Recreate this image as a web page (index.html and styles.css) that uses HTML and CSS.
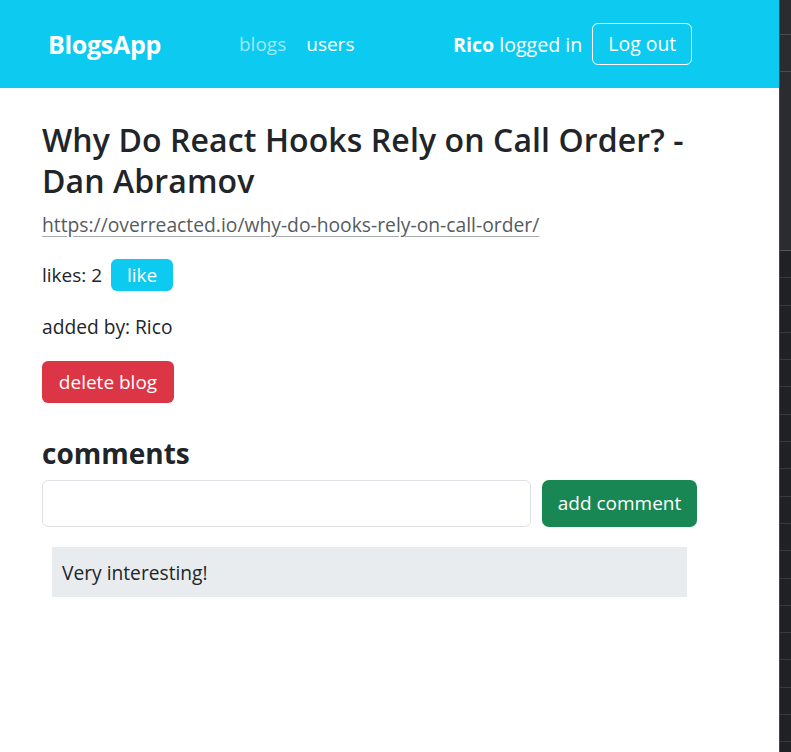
FILE: index.html
```html
<!DOCTYPE html>
<html lang="en">
<head>
<meta charset="utf-8">
<title>BlogsApp</title>
<link rel="stylesheet" href="styles.css">
</head>
<body>
<div class="page">
  <div class="app">
    <nav class="navbar">
      <a class="brand" href="#">BlogsApp</a>
      <div class="nav-links">
        <a class="nav-link dim" href="#">blogs</a>
        <a class="nav-link" href="#">users</a>
      </div>
      <div class="user-box">
        <span class="user-text"><b>Rico</b> logged in</span>
        <button class="btn btn-outline">Log out</button>
      </div>
    </nav>
    <main class="content">
      <h1 class="title">Why Do React Hooks Rely on Call Order? - Dan Abramov</h1>
      <a class="blog-url" href="#">https://overreacted.io/why-do-hooks-rely-on-call-order/</a>
      <div class="likes-row">
        <span>likes: 2</span>
        <button class="btn btn-like">like</button>
      </div>
      <p class="added">added by: Rico</p>
      <button class="btn btn-danger">delete blog</button>
      <h2 class="comments-title">comments</h2>
      <form class="comment-form">
        <input class="comment-input" type="text">
        <button class="btn btn-success" type="button">add comment</button>
      </form>
      <ul class="comment-list">
        <li class="comment-item">Very interesting!</li>
      </ul>
    </main>
  </div>
  <aside class="devtools">
    <div class="dt-top">
      <div class="dt-row r1"></div>
      <div class="dt-row r2"></div>
      <div class="dt-row r3"></div>
    </div>
    <div class="dt-bottom"></div>
  </aside>
</div>
</body>
</html>
```

FILE: styles.css
```css
* { box-sizing: border-box; }
html, body { margin: 0; padding: 0; }
body {
  font-family: "Open Sans", "Noto Sans", sans-serif;
  color: #212529;
  background: #fff;
}
.page {
  display: flex;
  width: 791px;
  height: 752px;
  overflow: hidden;
}
.app {
  width: 779px;
  flex: none;
  background: #fff;
}
.navbar {
  height: 88px;
  background: #0dcaf0;
  display: flex;
  align-items: center;
  padding-left: 48px;
}
.brand {
  width: 191px;
  color: #fff;
  font-weight: 700;
  font-size: 25px;
  text-decoration: none;
  letter-spacing: -0.3px;
}
.nav-links {
  width: 214px;
  display: flex;
  gap: 20px;
}
.nav-link {
  color: #fff;
  font-size: 19px;
  text-decoration: none;
}
.nav-link.dim { color: rgba(255,255,255,0.6); }
.user-box {
  display: flex;
  align-items: center;
  gap: 10px;
}
.user-text {
  color: #fff;
  font-size: 19.6px;
}
.btn {
  font-family: inherit;
  border: 1px solid transparent;
  border-radius: 6px;
  color: #fff;
  font-size: 19px;
  cursor: pointer;
  line-height: 1.5;
}
.btn-outline {
  background: transparent;
  border-color: #fff;
  height: 42px;
  width: 100px;
  padding: 0;
  font-size: 19.4px;
}
.content {
  padding: 31px 0 0 42px;
}
.title {
  margin: 0;
  font-size: 32px;
  font-weight: 600;
  line-height: 41px;
  width: 670px;
  letter-spacing: 0.1px;
}
.blog-url {
  display: inline-block;
  margin-top: 10px;
  color: #555b61;
  font-size: 19.3px;
  text-decoration: underline;
  text-decoration-color: #a8abae;
  text-underline-offset: 4px;
}
.likes-row {
  display: flex;
  align-items: center;
  gap: 9px;
  margin-top: 21px;
  font-size: 19px;
}
.btn-like {
  background: #0dcaf0;
  width: 62px;
  height: 32px;
  padding: 0;
}
.added {
  margin: 22px 0 0;
  font-size: 19.2px;
  line-height: 28px;
}
.btn-danger {
  margin-top: 20px;
  background: #dc3545;
  width: 132px;
  height: 42px;
  padding: 0;
}
.comments-title {
  margin: 33px 0 0;
  font-size: 28px;
  font-weight: 700;
  line-height: 34px;
}
.comment-form {
  display: flex;
  gap: 11px;
  margin-top: 10px;
}
.comment-input {
  width: 489px;
  height: 47px;
  border: 1px solid #dee2e6;
  border-radius: 6px;
  font-size: 18px;
}
.btn-success {
  background: #198754;
  width: 155px;
  height: 47px;
  padding: 0;
  border-radius: 7px;
}
.comment-list {
  list-style: none;
  margin: 20px 0 0;
  padding: 0 0 0 10px;
}
.comment-item {
  width: 635px;
  height: 50px;
  background: #e9ecef;
  padding-left: 10px;
  display: flex;
  align-items: center;
  font-size: 19.2px;
}
.devtools {
  width: 12px;
  flex: none;
  display: flex;
  flex-direction: column;
  border-left: 1px solid #45464a;
}
.dt-top {
  height: 251px;
  background: #2b2c30;
  display: flex;
  flex-direction: column;
}
.dt-row { border-bottom: 1px solid #4a4b50; }
.r1 { height: 35px; }
.r2 { height: 37px; }
.r3 { height: 179px; border-bottom-color: #55565a; }
.dt-bottom {
  flex: 1;
  background: repeating-linear-gradient(to bottom, #202124 0, #202124 26.3px, #3a3b3f 26.3px, #3a3b3f 27.3px);
}
```
